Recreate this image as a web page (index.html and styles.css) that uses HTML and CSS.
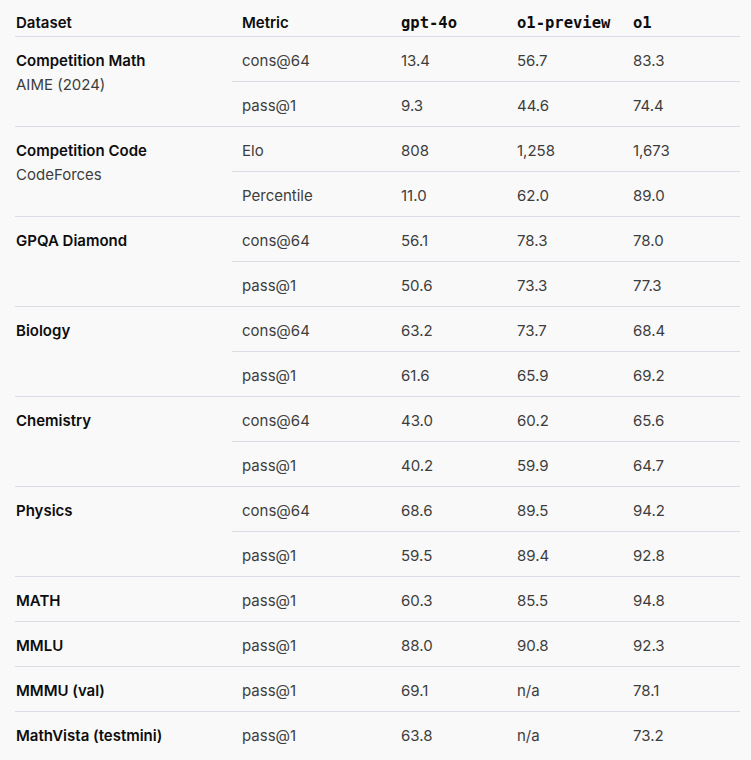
FILE: index.html
```html
<!DOCTYPE html>
<html lang="en">
<head>
<meta charset="utf-8">
<title>o1 evals</title>
<link rel="stylesheet" href="styles.css">
</head>
<body>
<table class="evals">
  <colgroup>
    <col class="c-dataset"><col class="c-metric"><col class="c-num"><col class="c-num"><col class="c-last">
  </colgroup>
  <thead>
    <tr>
      <th class="ds">Dataset</th>
      <th>Metric</th>
      <th class="mono">gpt-4o</th>
      <th class="mono">o1-preview</th>
      <th class="mono">o1</th>
    </tr>
  </thead>
  <tbody>
    <tr>
      <td class="ds" rowspan="2"><strong>Competition Math</strong><br>AIME (2024)</td>
      <td>cons@64</td><td>13.4</td><td>56.7</td><td>83.3</td>
    </tr>
    <tr class="end"><td>pass@1</td><td>9.3</td><td>44.6</td><td>74.4</td></tr>

    <tr>
      <td class="ds" rowspan="2"><strong>Competition Code</strong><br>CodeForces</td>
      <td>Elo</td><td>808</td><td>1,258</td><td>1,673</td>
    </tr>
    <tr class="end"><td>Percentile</td><td>11.0</td><td>62.0</td><td>89.0</td></tr>

    <tr>
      <td class="ds" rowspan="2"><strong>GPQA Diamond</strong></td>
      <td>cons@64</td><td>56.1</td><td>78.3</td><td>78.0</td>
    </tr>
    <tr class="end"><td>pass@1</td><td>50.6</td><td>73.3</td><td>77.3</td></tr>

    <tr>
      <td class="ds" rowspan="2"><strong>Biology</strong></td>
      <td>cons@64</td><td>63.2</td><td>73.7</td><td>68.4</td>
    </tr>
    <tr class="end"><td>pass@1</td><td>61.6</td><td>65.9</td><td>69.2</td></tr>

    <tr>
      <td class="ds" rowspan="2"><strong>Chemistry</strong></td>
      <td>cons@64</td><td>43.0</td><td>60.2</td><td>65.6</td>
    </tr>
    <tr class="end"><td>pass@1</td><td>40.2</td><td>59.9</td><td>64.7</td></tr>

    <tr>
      <td class="ds" rowspan="2"><strong>Physics</strong></td>
      <td>cons@64</td><td>68.6</td><td>89.5</td><td>94.2</td>
    </tr>
    <tr class="end"><td>pass@1</td><td>59.5</td><td>89.4</td><td>92.8</td></tr>

    <tr class="end">
      <td class="ds"><strong>MATH</strong></td>
      <td>pass@1</td><td>60.3</td><td>85.5</td><td>94.8</td>
    </tr>
    <tr class="end">
      <td class="ds"><strong>MMLU</strong></td>
      <td>pass@1</td><td>88.0</td><td>90.8</td><td>92.3</td>
    </tr>
    <tr class="end">
      <td class="ds"><strong>MMMU (val)</strong></td>
      <td>pass@1</td><td>69.1</td><td>n/a</td><td>78.1</td>
    </tr>
    <tr class="last">
      <td class="ds"><strong>MathVista (testmini)</strong></td>
      <td>pass@1</td><td>63.8</td><td>n/a</td><td>73.2</td>
    </tr>
  </tbody>
</table>
</body>
</html>
```
FILE: styles.css
```css
html, body {
  margin: 0;
  padding: 0;
  background: #f9f9f9;
}

body {
  font-family: Inter, "Liberation Sans", sans-serif;
  font-size: 15px;
  color: #3d3d3d;
}

.evals {
  margin: 0 0 0 15px;
  width: 725px;
  border-collapse: collapse;
  table-layout: fixed;
}

.c-dataset { width: 217px; }
.c-metric { width: 159px; }
.c-num { width: 116px; }
.c-last { width: 117px; }

.evals th,
.evals td {
  text-align: left;
  vertical-align: top;
  line-height: 24px;
  padding: 12px 10px 8px 10px;
  border-bottom: 1px solid #dcdce5;
  white-space: nowrap;
}

.evals th {
  padding-top: 11px;
  padding-bottom: 1px;
  font-weight: 600;
  color: #0d0d0d;
}

.evals .ds {
  padding-left: 1px;
}

.evals th.mono {
  font-family: "DejaVu Sans Mono", monospace;
  font-size: 15.5px;
  font-weight: 700;
}

.evals td strong {
  font-weight: 600;
  color: #0d0d0d;
}

.evals tr.last td {
  border-bottom: none;
}
```
